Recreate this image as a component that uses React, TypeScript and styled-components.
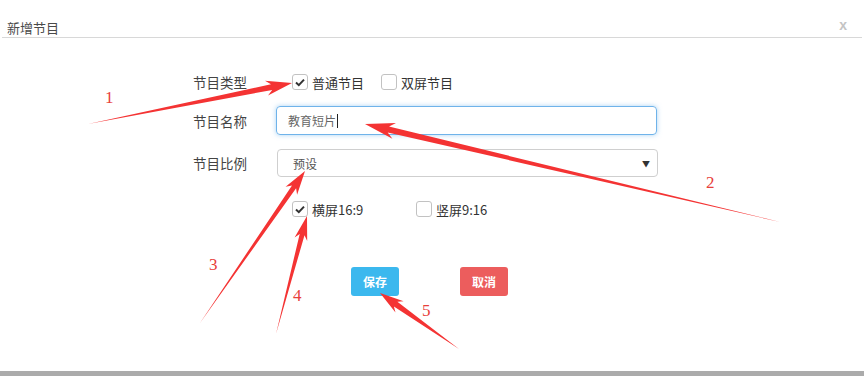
import React from "react";
import styled, { createGlobalStyle } from "styled-components";

const Global = createGlobalStyle`
  html, body { margin: 0; padding: 0; background: #fff; }
  body { font-family: "Noto Sans CJK SC", "Noto Sans", sans-serif; overflow: hidden; }
`;

const Page = styled.div`
  position: relative;
  width: 864px;
  height: 376px;
  display: flex;
  flex-direction: column;
  background: #fff;
  overflow: hidden;
`;

const Header = styled.div`
  margin: 0 2px;
  height: 38px;
  padding: 0 5px;
  border-bottom: 1px solid #d8d8d8;
  display: flex;
  align-items: flex-end;
  justify-content: space-between;
  box-sizing: border-box;
`;

const Title = styled.div`
  font-size: 13px;
  color: #4a4a4a;
  line-height: 18px;
  padding-bottom: 0;
`;

const Close = styled.div`
  font-family: "Liberation Sans", Arial, sans-serif;
  font-size: 14px;
  font-weight: bold;
  color: #c4c4c4;
  line-height: 20px;
  padding: 0 10px 2px 0;
`;

const Form = styled.div`
  padding: 35px 0 0 193px;
  display: flex;
  flex-direction: column;
`;

const Row = styled.div<{ $top: number; $h: number }>`
  display: flex;
  align-items: center;
  margin-top: ${(p) => p.$top}px;
  height: ${(p) => p.$h}px;
`;

const Label = styled.div`
  width: 83px;
  font-size: 13.5px;
  color: #444;
`;

const CheckGroup = styled.div`
  display: flex;
  align-items: center;
  margin-left: 16px;
`;

const CheckItem = styled.label<{ $w?: number; $gap?: number }>`
  display: flex;
  align-items: center;
  ${(p) => (p.$w ? `width: ${p.$w}px;` : "")}
  margin-right: ${(p) => p.$gap ?? 0}px;
  font-size: 13px;
  color: #333;
`;

const Box = styled.span`
  width: 14px;
  height: 14px;
  border: 1px solid #c2c2c2;
  border-radius: 3px;
  display: inline-flex;
  align-items: center;
  justify-content: center;
  margin-right: 4px;
  background: #fff;
`;

const FakeInput = styled.div`
  width: 381px;
  height: 29px;
  box-sizing: border-box;
  border: 1px solid #6fb3ea;
  border-radius: 4px;
  box-shadow: 0 0 5px rgba(102, 175, 233, 0.55);
  padding-left: 11px;
  display: flex;
  align-items: center;
  font-size: 12px;
  color: #666;
`;

const Caret = styled.span`
  display: inline-block;
  width: 1px;
  height: 14px;
  background: #222;
  margin-left: 1px;
`;

const FakeSelect = styled.div`
  width: 381px;
  height: 28px;
  margin-left: 1px;
  box-sizing: border-box;
  border: 1px solid #cfcfcf;
  border-radius: 4px;
  padding: 0 7px 0 15px;
  display: flex;
  align-items: center;
  justify-content: space-between;
  font-size: 12px;
  color: #555;
`;

const Tri = styled.span`
  font-size: 8px;
  color: #333;
`;

const Buttons = styled.div`
  display: flex;
  margin: 49px 0 0 158px;
  gap: 61px;
`;

const Btn = styled.div<{ $bg: string }>`
  width: 48px;
  height: 29px;
  border-radius: 3px;
  background: ${(p) => p.$bg};
  color: #fff;
  font-size: 12px;
  font-weight: bold;
  display: flex;
  align-items: center;
  justify-content: center;
`;

const Bottom = styled.div`
  margin-top: auto;
  height: 5px;
  background: #ababab;
`;

const Overlay = styled.svg`
  position: absolute;
  left: 0;
  top: 0;
  pointer-events: none;
`;

const Check = () => (
  <svg width="10" height="9" viewBox="0 0 10 9">
    <path d="M1 4.6 L3.8 7.2 L9 1.6" fill="none" stroke="#333" strokeWidth="2" />
  </svg>
);

type Pt = [number, number];

function arrowPoints(tail: Pt, tip: Pt, headLen: number, headW: number, shaftW: number) {
  const dx = tip[0] - tail[0];
  const dy = tip[1] - tail[1];
  const len = Math.hypot(dx, dy);
  const ux = dx / len;
  const uy = dy / len;
  const nx = -uy;
  const ny = ux;
  const bx = tip[0] - ux * headLen;
  const by = tip[1] - uy * headLen;
  const bx2 = tip[0] - ux * headLen * 0.8;
  const by2 = tip[1] - uy * headLen * 0.8;
  const pts: Pt[] = [
    tail,
    [bx2 + nx * shaftW / 2, by2 + ny * shaftW / 2],
    [bx + nx * headW / 2, by + ny * headW / 2],
    tip,
    [bx - nx * headW / 2, by - ny * headW / 2],
    [bx2 - nx * shaftW / 2, by2 - ny * shaftW / 2],
  ];
  return pts.map((p) => `${p[0].toFixed(1)},${p[1].toFixed(1)}`).join(" ");
}

const arrows: { tail: Pt; tip: Pt; hl: number; hw: number; sw: number }[] = [
  { tail: [88, 124], tip: [292, 83], hl: 26, hw: 15, sw: 6 },
  { tail: [780, 222], tip: [365, 124], hl: 30, hw: 16, sw: 6 },
  { tail: [200, 323], tip: [305, 171], hl: 24, hw: 14, sw: 5 },
  { tail: [276, 334], tip: [307, 216], hl: 24, hw: 13, sw: 5 },
  { tail: [459, 349], tip: [380, 293], hl: 24, hw: 14, sw: 6 },
];

const nums: { t: string; x: number; y: number }[] = [
  { t: "1", x: 105, y: 103 },
  { t: "2", x: 706, y: 188 },
  { t: "3", x: 209, y: 270 },
  { t: "4", x: 293, y: 301 },
  { t: "5", x: 422, y: 316 },
];

export default function App() {
  return (
    <Page>
      <Global />
      <Header>
        <Title>新增节目</Title>
        <Close>x</Close>
      </Header>
      <Form>
        <Row $top={0} $h={18}>
          <Label>节目类型</Label>
          <CheckGroup>
            <CheckItem $gap={17}>
              <Box><Check /></Box>普通节目
            </CheckItem>
            <CheckItem>
              <Box />双屏节目
            </CheckItem>
          </CheckGroup>
        </Row>
        <Row $top={15} $h={29}>
          <Label>节目名称</Label>
          <FakeInput>
            教育短片<Caret />
          </FakeInput>
        </Row>
        <Row $top={14} $h={28}>
          <Label>节目比例</Label>
          <FakeSelect>
            <span>预设</span>
            <Tri>▼</Tri>
          </FakeSelect>
        </Row>
        <Row $top={23} $h={18}>
          <Label />
          <CheckGroup>
            <CheckItem $w={124}>
              <Box><Check /></Box>横屏16:9
            </CheckItem>
            <CheckItem>
              <Box />竖屏9:16
            </CheckItem>
          </CheckGroup>
        </Row>
        <Buttons>
          <Btn $bg="#3bb8ee">保存</Btn>
          <Btn $bg="#ec5d5d">取消</Btn>
        </Buttons>
      </Form>
      <Bottom />
      <Overlay width="864" height="376" viewBox="0 0 864 376">
        {arrows.map((a, i) => (
          <polygon key={i} points={arrowPoints(a.tail, a.tip, a.hl, a.hw, a.sw)} fill="#f43333" />
        ))}
        {nums.map((n) => (
          <text
            key={n.t}
            x={n.x}
            y={n.y}
            fontFamily="'Liberation Serif', serif"
            fontSize="17"
            fill="#e8403a"
          >
            {n.t}
          </text>
        ))}
      </Overlay>
    </Page>
  );
}
